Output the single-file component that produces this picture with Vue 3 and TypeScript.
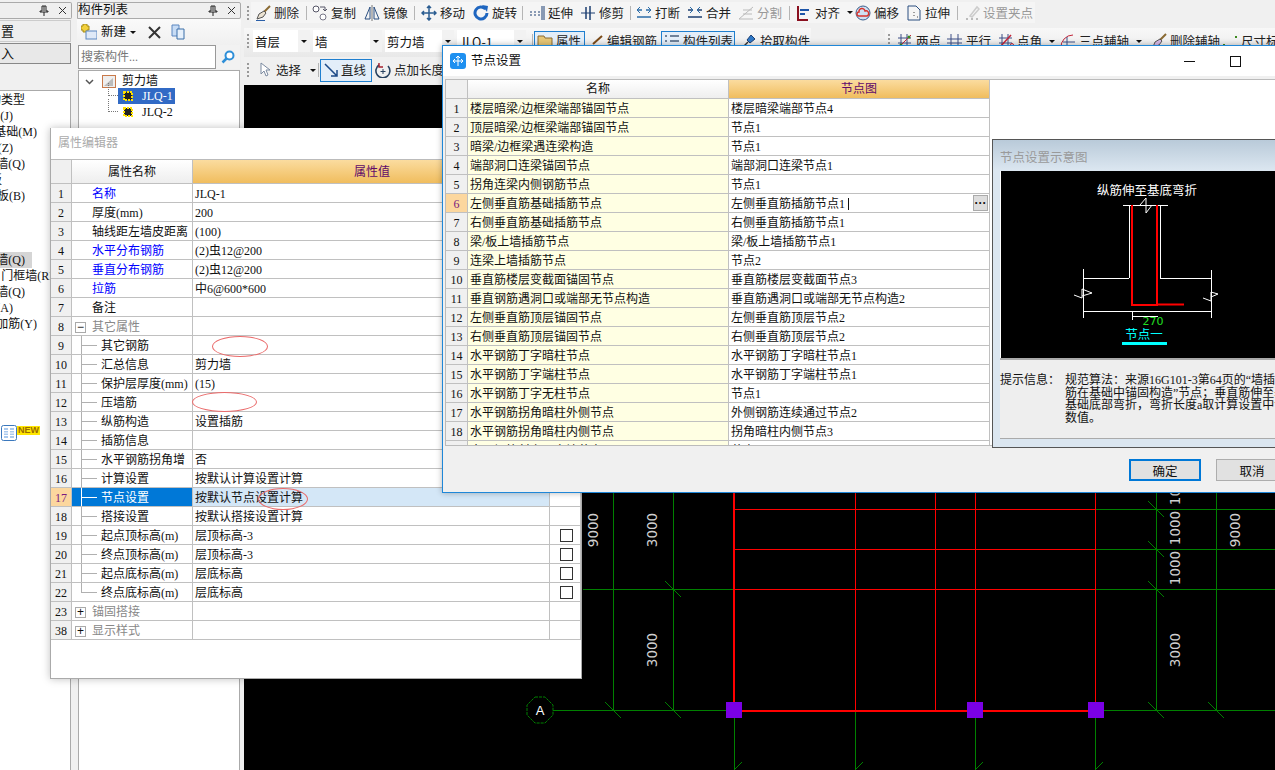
<script setup lang="ts">
interface Tool { icon?: string; text?: string; w?: number; pad?: number; caret?: boolean; off?: boolean; sep?: boolean; on?: boolean }

const L = (d: string, c = '#1d3f72', w = 1) => `<path d="${d}" fill="none" stroke="${c}" stroke-width="${w}"/>`

const icons: Record<string, string> = {
  brush: L('M15 1 9 7', '#8a6a32', 2) + '<path d="M9 6l2 2-3 4-6 2 2-5z" fill="#ece3d2" stroke="#555"/>' + L('M1 15.5h9', '#2a5fa8'),
  copy: '<circle cx="4" cy="4" r="3" fill="#fff" stroke="#556"/><circle cx="11" cy="12" r="3" fill="#fff" stroke="#778"/>' + L('M8 2h5v4M11 4l2 2 2-2', '#556'),
  mirror: L('M6 2 1 14h5zM10 2l5 12h-5z', '#2b4f80') + L('M8 0v16', '#777'),
  move: L('M8 1v14M1 8h14M6 3l2-2 2 2M6 13l2 2 2-2M3 6 1 8l2 2M13 6l2 2-2 2', '#2b5d91', 1.5),
  rotate: L('M12.5 4A6 6 0 1 0 14 8', '#1f66c0', 3) + '<path d="M9 0l6 1-1 6z" fill="#1f66c0"/>',
  extend: L('M1 7h2M5 7h2M9 7h2M1 10h2M5 10h2M9 10h2', '#1d3f72') + L('M13 1v14M15 1v14', '#1d3f72'),
  trim: L('M1 8h14', '#1d3f72') + L('M6 2v12M10 1v14', '#1d3f72', 1.5),
  cut: L('M1 5h5M10 5h5M1 12h14', '#2b6ca8', 1.5) + L('M4 2 1 5l3 3M12 2l3 3-3 3', '#2b6ca8'),
  join: L('M1 5h5M10 5h5M1 12h14', '#1d3f72', 1.5) + L('M3 2l3 3-3 3M13 2l-3 3 3 3', '#2b6ca8'),
  split: L('M1 14 15 2M1 14h14M5 9h9M5 5h9', '#bbb'),
  align: L('M2 1v14h10', '#8a1020', 2) + L('M4 5h9M4 9h5', '#1d55a8', 2),
  offset: '<circle cx="8" cy="8" r="7" fill="#cfe0f2" stroke="#3a5f8c"/>' + L('M4 11a2 2 0 0 1 0-4 3 3 0 0 1 6-1 2.5 2.5 0 0 1 2 5z', '#d8342c', 1.4),
  stretch: L('M2 1h8l4 4v10H2z', '#2b4f80') + L('M8 7v1M8 10v1M11 12h1', '#444'),
  grip: L('M2 14h2M7 14h2M12 14h2', '#bbb', 2) + L('M6 11 13 2l2 2-7 8z', '#ccc', 1.5),
  folder: '<path d="M1 3h6l1 2h7v9H1z" fill="#e6c676" stroke="#8a6a32"/>',
  edit: L('M1 13h13', '#888', 2) + L('M5 11 14 3', '#7a4a18', 2),
  list: L('M1 3h2M1 8h2M1 13h2M6 3h9M6 8h9M6 13h9', '#4a5f7a', 1.5),
  pick: L('M1 15 7 9', '#333', 1.5) + '<path d="M6 7l4-5 4 4-5 4z" fill="#2f79c8" stroke="#1d3f72"/>',
  two: L('M4 1v14M10 1v14M1 5h13M1 10h13', '#3d4f86') + L('M2 14 14 2', '#c3263a') + '<circle cx="4" cy="12" r="1.5" fill="#3c8a1f"/><circle cx="12" cy="4" r="1.5" fill="#3c8a1f"/>',
  para: L('M4 1v14M11 1v14M0 6h15M0 10h15', '#3d4f86'),
  angle: L('M4 1v14M10 1v14M1 5h13M1 10h13', '#3d4f86') + L('M2 14 13 2', '#c3263a', 1.5) + '<circle cx="14" cy="12" r="1.5" fill="none" stroke="#c3263a"/>',
  arc: L('M1 15A12 12 0 0 1 13 2', '#c3263a') + L('M7 4v11M3 9h12', '#3d4f86'),
  delaxis: L('M15 1 9 7', '#8a6a32', 2) + '<path d="M9 6l2 2-3 4-6 2 2-5z" fill="#d7b9e6" stroke="#555"/>',
  dim: L('M2 11v2M14 3v2M7 14h1M11 14h1', '#3c8a1f', 2),
  select: '<path d="M4 1v11l3-3 2 5 2-1-2-5h4z" fill="#fff" stroke="#7b8aa0"/>',
  line: L('M2 2 14 14M8 14h6V8', '#1d4a88', 1.5),
  lengthen: L('M4 3a7 7 0 1 0 9 1', '#27415f', 1.6) + L('M4 1v4h4', '#a51f2c', 1.4) + L('M8 7v5M5.5 9.5h5', '#27415f'),
  add: '<path d="M2 0h4v2h2v4H6v2H2V6H0V2h2z" fill="#f2d03c" stroke="#a58a16"/><rect x="5" y="7" width="11" height="8" fill="#dfe9f7" stroke="#5b86c0"/>',
  copydoc: '<path d="M2 1h7v11H2z" fill="#c7dcf5" stroke="#5b86c0"/><path d="M7 5h7v10H7z" fill="#e6f0fb" stroke="#3a6ea8"/>',
}

const row1: Tool[] = [
  { icon: 'brush', text: '删除', w: 46 }, { sep: true },
  { icon: 'copy', text: '复制', w: 52 },
  { icon: 'mirror', text: '镜像', w: 45 }, { sep: true },
  { icon: 'move', text: '移动', w: 53, pad: 1 },
  { icon: 'rotate', text: '旋转', w: 44 }, { sep: true },
  { icon: 'extend', text: '延伸', w: 52, pad: 1 },
  { icon: 'trim', text: '修剪', w: 45 }, { sep: true },
  { icon: 'cut', text: '打断', w: 51 },
  { icon: 'join', text: '合并', w: 51 },
  { icon: 'split', text: '分割', w: 46, off: true }, { sep: true },
  { icon: 'align', text: '对齐', w: 60, caret: true, pad: 1 },
  { icon: 'offset', text: '偏移', w: 51 },
  { icon: 'stretch', text: '拉伸', w: 46 }, { sep: true },
  { icon: 'grip', text: '设置夹点', w: 72, off: true, pad: 1 },
]

const combos = [
  { text: '首层', w: 57 }, { text: '墙', w: 69 }, { text: '剪力墙', w: 69 }, { text: 'JLQ-1', w: 69 },
]

const row2: Tool[] = [
  { icon: 'folder', text: '属性', w: 51, on: true, pad: 2 },
  { icon: 'edit', text: '编辑钢筋', w: 76, pad: 3 },
  { icon: 'list', text: '构件列表', w: 74, on: true, pad: 2 },
  { icon: 'pick', text: '拾取构件', w: 76, pad: 6 },
]

const row2b: Tool[] = [
  { icon: 'two', text: '两点', w: 50 },
  { icon: 'para', text: '平行', w: 51 },
  { icon: 'angle', text: '点角', w: 62, caret: true },
  { icon: 'arc', text: '三点辅轴', w: 91, caret: true },
  { icon: 'delaxis', text: '删除辅轴', w: 71 },
  { icon: 'dim', text: '尺寸标注', w: 80 },
]

const leftItems = [
  { text: '构类型', end: 25 }, { text: '(J)', end: 13 }, { text: '基础(M)', end: 37 }, { text: '(Z)', end: 13 },
  { text: '墙(Q)', end: 25 }, { text: '板', end: 2 }, { text: '板(B)', end: 25 }, { text: '', end: 0 }, { text: '', end: 0 },
  { text: '', end: 0 }, { text: '墙(Q)', end: 25, hot: true }, { text: '门框墙(RF)', end: 60 }, { text: '墙(Q)', end: 25 },
  { text: '(A)', end: 13 }, { text: '加筋(Y)', end: 37 },
]

type Kind = 'plain' | 'link' | 'group' | 'child' | 'last' | 'closed'
const props: { n: number; name: string; value?: string; kind: Kind; check?: boolean; cur?: boolean }[] = [
  { n: 1, name: '名称', value: 'JLQ-1', kind: 'link' },
  { n: 2, name: '厚度(mm)', value: '200', kind: 'plain' },
  { n: 3, name: '轴线距左墙皮距离', value: '(100)', kind: 'plain' },
  { n: 4, name: '水平分布钢筋', value: '(2)虫12@200', kind: 'link' },
  { n: 5, name: '垂直分布钢筋', value: '(2)虫12@200', kind: 'link' },
  { n: 6, name: '拉筋', value: '中6@600*600', kind: 'link' },
  { n: 7, name: '备注', kind: 'plain' },
  { n: 8, name: '其它属性', kind: 'group' },
  { n: 9, name: '其它钢筋', kind: 'child' },
  { n: 10, name: '汇总信息', value: '剪力墙', kind: 'child' },
  { n: 11, name: '保护层厚度(mm)', value: '(15)', kind: 'child' },
  { n: 12, name: '压墙筋', kind: 'child' },
  { n: 13, name: '纵筋构造', value: '设置插筋', kind: 'child' },
  { n: 14, name: '插筋信息', kind: 'child' },
  { n: 15, name: '水平钢筋拐角增', value: '否', kind: 'child' },
  { n: 16, name: '计算设置', value: '按默认计算设置计算', kind: 'child' },
  { n: 17, name: '节点设置', value: '按默认节点设置计算', kind: 'child', cur: true },
  { n: 18, name: '搭接设置', value: '按默认搭接设置计算', kind: 'child' },
  { n: 19, name: '起点顶标高(m)', value: '层顶标高-3', kind: 'child', check: true },
  { n: 20, name: '终点顶标高(m)', value: '层顶标高-3', kind: 'child', check: true },
  { n: 21, name: '起点底标高(m)', value: '层底标高', kind: 'child', check: true },
  { n: 22, name: '终点底标高(m)', value: '层底标高', kind: 'last', check: true },
  { n: 23, name: '锚固搭接', kind: 'closed' },
  { n: 38, name: '显示样式', kind: 'closed' },
]

const nodes: [string, string][] = [
  ['楼层暗梁/边框梁端部锚固节点', '楼层暗梁端部节点4'],
  ['顶层暗梁/边框梁端部锚固节点', '节点1'],
  ['暗梁/边框梁遇连梁构造', '节点1'],
  ['端部洞口连梁锚固节点', '端部洞口连梁节点1'],
  ['拐角连梁内侧钢筋节点', '节点1'],
  ['左侧垂直筋基础插筋节点', '左侧垂直筋插筋节点1'],
  ['右侧垂直筋基础插筋节点', '右侧垂直筋插筋节点1'],
  ['梁/板上墙插筋节点', '梁/板上墙插筋节点1'],
  ['连梁上墙插筋节点', '节点2'],
  ['垂直筋楼层变截面锚固节点', '垂直筋楼层变截面节点3'],
  ['垂直钢筋遇洞口或端部无节点构造', '垂直筋遇洞口或端部无节点构造2'],
  ['左侧垂直筋顶层锚固节点', '左侧垂直筋顶层节点2'],
  ['右侧垂直筋顶层锚固节点', '右侧垂直筋顶层节点2'],
  ['水平钢筋丁字暗柱节点', '水平钢筋丁字暗柱节点1'],
  ['水平钢筋丁字端柱节点', '水平钢筋丁字端柱节点1'],
  ['水平钢筋丁字无柱节点', '节点1'],
  ['水平钢筋拐角暗柱外侧节点', '外侧钢筋连续通过节点2'],
  ['水平钢筋拐角暗柱内侧节点', '拐角暗柱内侧节点3'],
  ['水平钢筋斜交丁字墙节点', '节点1'],
]

// 画布坐标直接用页面坐标，viewBox 从 (244,85) 开始。线段写成 [x, y, w, h]
const greenLines = [
  [613, 493, 1, 217], [673, 493, 1, 217], [1156, 493, 1, 217], [1216, 493, 1, 217],
  [734, 710, 1, 60], [855, 710, 1, 60], [975, 710, 1, 60], [1095, 710, 1, 60],
  [1095, 509, 180, 1], [1095, 549, 180, 1], [583, 589, 151, 1], [1095, 589, 180, 1],
  [553, 710, 181, 1], [1095, 710, 180, 1],
]
const ticks = [
  [613, 710], [673, 710], [1156, 710], [1216, 710], [673, 589], [1156, 589], [1156, 549], [1156, 509],
]
const feet = [734, 855, 975, 1095]
const redLines = [
  [855, 493, 1, 217], [935, 493, 1, 217], [975, 493, 1, 217], [1095, 493, 1, 217],
  [734, 509, 361, 1], [734, 549, 361, 1], [734, 589, 361, 1],
  [733, 493, 2, 218], [734, 710, 362, 2],
]
const dims = [
  { x: 594, y: 530, t: '9000' }, { x: 653, y: 530, t: '3000' }, { x: 653, y: 650, t: '3000' },
  { x: 1176, y: 488, t: '1000' }, { x: 1176, y: 528, t: '1000' }, { x: 1176, y: 568, t: '1000' },
  { x: 1236, y: 530, t: '9000' }, { x: 1176, y: 650, t: '3000' },
]
const squares = [726, 967, 1088]
</script>

<template>
  <div class="app">
    <!-- 左侧导航 -->
    <aside class="nav">
      <div class="dock-title">
        <span class="dock-btns">
          <svg width="10" height="11" viewBox="0 0 10 11"><path d="M3 1h4v5h2v1H1V6h2zM5 7v4M5 1v5" fill="none" stroke="#222"/></svg>
          <svg width="9" height="9" viewBox="0 0 9 9"><path d="M1 1l7 7M8 1 1 8" stroke="#333"/></svg>
        </span>
      </div>
      <div class="nav-btn"><span>置</span></div>
      <div class="nav-btn dark"><span>入</span></div>
      <div class="nav-list">
        <div v-for="(it, i) in leftItems" :key="i" class="nav-item" :class="{ hot: it.hot }">
          <span class="clip" :style="{ width: it.end + 'px' }"><span>{{ it.text }}</span></span>
        </div>
        <div class="new-row">
          <svg width="16" height="16" viewBox="0 0 16 16"><rect x=".5" y=".5" width="15" height="15" rx="2" fill="#fff" stroke="#3b78bd"/><rect x="3" y="3" width="4" height="10" fill="#a9c9ee"/><rect x="9" y="3" width="4" height="10" fill="#a9c9ee"/><path d="M3 5.5h4M3 8h4M3 10.5h4M9 5.5h4M9 8h4M9 10.5h4" stroke="#fff"/></svg>
          <span class="new">NEW</span>
        </div>
      </div>
    </aside>

    <!-- 构件列表 -->
    <aside class="comp">
      <div class="dock-title wide">
        <span class="dock-name">构件列表</span>
        <span class="dock-btns">
          <svg width="10" height="11" viewBox="0 0 10 11"><path d="M3 1h4v5h2v1H1V6h2zM5 7v4M5 1v5" fill="none" stroke="#222"/></svg>
          <svg width="9" height="9" viewBox="0 0 9 9"><path d="M1 1l7 7M8 1 1 8" stroke="#333"/></svg>
        </span>
      </div>
      <div class="comp-tools">
        <svg width="16" height="16" viewBox="0 0 16 16" v-html="icons.add"></svg>
        <span class="new-text">新建</span><span class="caret"></span>
        <svg class="x" width="13" height="13" viewBox="0 0 13 13"><path d="M1 1l11 11M12 1 1 12" stroke="#333" stroke-width="2"/></svg>
        <svg class="dup" width="16" height="16" viewBox="0 0 16 16" v-html="icons.copydoc"></svg>
      </div>
      <div class="search">
        <span class="search-input">搜索构件...</span>
        <span class="search-btn">
          <svg width="14" height="14" viewBox="0 0 14 14"><circle cx="8.5" cy="5.5" r="4" fill="#fff" stroke="#2e8fd8" stroke-width="2"/><path d="M5.5 8.5 1.5 12.5" stroke="#2e8fd8" stroke-width="2.5"/></svg>
        </span>
      </div>
      <div class="tree">
        <div class="tree-row root">
          <svg class="chev" width="9" height="6" viewBox="0 0 9 6"><path d="M1 1l3.5 3.5L8 1" fill="none" stroke="#555" stroke-width="1.5"/></svg>
          <svg width="14" height="13" viewBox="0 0 14 13"><rect x=".5" y=".5" width="13" height="12" fill="#eee" stroke="#c9794a"/><path d="M2 11 11 3v8z" fill="#bbb"/></svg>
          <span class="root-name">剪力墙</span>
        </div>
        <div class="tree-row child">
          <span class="dots"></span>
          <span class="sel">
            <svg width="12" height="12" viewBox="0 0 12 12"><rect x="2" y="2" width="8" height="8" fill="#222" stroke="#ffe100" stroke-width="2" stroke-dasharray="2 1"/></svg>
            <span class="leaf">JLQ-1</span>
          </span>
        </div>
        <div class="tree-row child">
          <span class="dots"></span>
          <span class="unsel">
            <svg width="12" height="12" viewBox="0 0 12 12"><rect x="2" y="2" width="8" height="8" fill="#222" stroke="#ffe100" stroke-width="2" stroke-dasharray="2 1"/></svg>
            <span class="leaf">JLQ-2</span>
          </span>
        </div>
      </div>
    </aside>

    <!-- 工具栏 + 绘图区 -->
    <main class="main">
      <div class="bar bar1">
        <span class="grip"></span>
        <div class="tool-strip">
          <template v-for="(t, i) in row1" :key="i">
            <span v-if="t.sep" class="sep"></span>
            <span v-else class="tool" :class="{ off: t.off }" :style="{ width: t.w + 'px', paddingLeft: (t.pad ?? 0) + 'px' }">
              <svg width="16" height="16" viewBox="0 0 16 16" v-html="icons[t.icon!]"></svg>
              <span>{{ t.text }}</span><span v-if="t.caret" class="caret"></span>
            </span>
          </template>
        </div>
      </div>
      <div class="bar bar2">
        <div class="seg seg-a">
          <span class="grip"></span>
          <span v-for="c in combos" :key="c.text" class="combo" :style="{ width: c.w + 'px' }">
            <span class="combo-text">{{ c.text }}</span><span class="combo-arrow"><span class="caret"></span></span>
          </span>
          <span class="sep sep-a"></span>
          <span v-for="t in row2" :key="t.text" class="tool" :class="{ on: t.on }" :style="{ width: t.w + 'px', paddingLeft: t.pad + 'px' }">
            <svg width="16" height="16" viewBox="0 0 16 16" v-html="icons[t.icon!]"></svg>
            <span>{{ t.text }}</span>
          </span>
        </div>
        <div class="seg seg-b">
          <span class="grip"></span>
          <span v-for="t in row2b" :key="t.text" class="tool" :style="{ width: t.w + 'px' }">
            <svg width="16" height="16" viewBox="0 0 16 16" v-html="icons[t.icon!]"></svg>
            <span>{{ t.text }}</span><span v-if="t.caret" class="caret"></span>
          </span>
        </div>
      </div>
      <div class="bar bar3">
        <span class="grip"></span>
        <span class="tool sel-tool">
          <svg width="16" height="16" viewBox="0 0 16 16" v-html="icons.select"></svg>
          <span>选择</span><span class="caret"></span>
        </span>
        <span class="sep sep-b"></span>
        <span class="tool on line-tool">
          <svg width="16" height="16" viewBox="0 0 16 16" v-html="icons.line"></svg>
          <span>直线</span>
        </span>
        <span class="tool len-tool">
          <svg width="16" height="16" viewBox="0 0 16 16" v-html="icons.lengthen"></svg>
          <span>点加长度</span>
        </span>
      </div>
      <svg class="canvas" viewBox="244 85 1031 685" width="1031" height="685">
        <rect v-for="r in greenLines" :key="r.join()" :x="r[0]" :y="r[1]" :width="r[2]" :height="r[3]" fill="#008000" />
        <g fill="none" stroke="#008000">
          <path v-for="p in ticks" :key="p.join()" :d="`M${p[0] - 8} ${p[1] - 8}L${p[0] + 8} ${p[1] + 8}`" />
          <path v-for="x in feet" :key="x" :d="`M${x} 770L${x + 8} 762`" />
        </g>
        <rect v-for="r in redLines" :key="r.join()" :x="r[0]" :y="r[1]" :width="r[2]" :height="r[3]" fill="#f00" />
        <rect v-for="x in squares" :key="x" :x="x" y="702" width="16" height="16" fill="#7a00e6" />
        <text v-for="d in dims" :key="d.x + '-' + d.y" class="dim" :x="d.x" :y="d.y" :transform="`rotate(-90 ${d.x} ${d.y})`" text-anchor="middle" dominant-baseline="middle">{{ d.t }}</text>
        <path d="M535 697h10l8 8v10l-8 8h-10l-8-8v-10z" fill="none" stroke="#008000" stroke-dasharray="3 1" />
        <text class="axis" x="540" y="715" text-anchor="middle">A</text>
      </svg>
    </main>

    <!-- 属性编辑器浮动窗口 -->
    <section class="props-win">
      <header class="props-title">属性编辑器</header>
      <div class="pg">
        <div class="pg-row pg-head">
          <span class="pg-num"></span>
          <span class="pg-name head-name">属性名称</span>
          <span class="pg-val head-val">属性值</span>
          <span class="pg-end head-val"></span>
        </div>
        <div v-for="p in props" :key="p.n" class="pg-row" :class="{ cur: p.cur }">
          <span class="pg-num">{{ p.n }}</span>
          <span class="pg-name" :class="p.kind">
            <span v-if="p.kind === 'group' || p.kind === 'closed'" class="box">{{ p.kind === 'group' ? '−' : '+' }}</span>
            {{ p.name }}
          </span>
          <span class="pg-val">{{ p.value }}</span>
          <span class="pg-end"><span v-if="p.check" class="chk"></span></span>
        </div>
      </div>
      <span class="mark m1"></span>
      <span class="mark m2"></span>
      <span class="mark m3"></span>
    </section>

    <!-- 节点设置对话框 -->
    <section class="node-win">
      <header class="node-title">
        <svg width="16" height="16" viewBox="0 0 16 16"><rect width="16" height="16" rx="3" fill="#1e90f0"/><path d="M8 3v10M4 8h8M6 5l2-2 2 2M3 8l2-2M3 8l2 2M13 8l-2-2M13 8l-2 2" stroke="#fff" fill="none"/></svg>
        <span class="node-name">节点设置</span>
        <span class="ctl"><svg width="11" height="11" viewBox="0 0 11 11"><path d="M0 5.5h11" stroke="#111" /></svg></span>
        <span class="ctl"><svg width="11" height="11" viewBox="0 0 11 11"><rect x=".5" y=".5" width="10" height="10" fill="none" stroke="#111"/></svg></span>
        <span class="ctl"><svg width="11" height="11" viewBox="0 0 11 11"><path d="M0 0l11 11M11 0 0 11" stroke="#111"/></svg></span>
      </header>
      <div class="node-band"></div>
      <div class="ng">
        <div class="ng-row ng-head">
          <span class="ng-num"></span>
          <span class="ng-cell head-name">名称</span>
          <span class="ng-cell head-val">节点图</span>
        </div>
        <div v-for="(r, i) in nodes" :key="i" class="ng-row" :class="{ cur: i === 5 }">
          <span class="ng-num">{{ i + 1 }}</span>
          <span class="ng-cell ng-label">{{ r[0] }}</span>
          <span class="ng-cell ng-value">
            <span>{{ r[1] }}<span v-if="i === 5" class="cursor"></span></span>
            <span v-if="i === 5" class="more">···</span>
          </span>
        </div>
      </div>
      <footer class="node-foot">
        <button class="btn primary" type="button">确定</button>
        <button class="btn" type="button">取消</button>
      </footer>

      <div class="preview">
        <div class="preview-title">节点设置示意图</div>
        <div class="preview-pic">
          <svg viewBox="1001 171 300 187" width="300" height="187">
            <text class="pic-title" x="1147" y="195" text-anchor="middle">纵筋伸至基底弯折</text>
            <g fill="none" stroke="#fff">
              <path d="M1123 205.5H1168M1129.5 205V278M1160.5 205V278M1083 278.5H1129M1160 278.5H1211M1083.5 269V318M1211.5 270V318M1083 311.5H1211" />
              <path d="M1132 316.5H1158M1132.5 312V320" />
              <path d="M1140 205L1146 198V213L1152 205" />
              <path d="M1074 295L1082 298V289L1092 293L1082 296" />
              <path d="M1203 298L1211 301V292L1218 294L1211 297" />
            </g>
            <path d="M1132 205V305H1157V205M1157 304.5H1184" fill="none" stroke="#f00" stroke-width="2" />
            <text class="pic-num" x="1153" y="325" text-anchor="middle">270</text>
            <text class="pic-node" x="1144" y="339" text-anchor="middle">节点一</text>
            <rect x="1122" y="342" width="45" height="3" fill="#00ffff" />
          </svg>
        </div>
        <div class="hint">
          <span class="hint-label">提示信息：</span>
          <span class="hint-text">规范算法：来源16G101-3第64页的“墙插筋<br>筋在基础中锚固构造”节点；垂直筋伸至基础<br>基础底部弯折，弯折长度a取计算设置中设定的<br>数值。</span>
        </div>
      </div>
    </section>
  </div>
</template>

<style>
html, body { margin: 0; background: #f0f0f0; overflow: hidden; }
</style>

<style scoped>
.app {
  position: relative;
  display: flex;
  width: 1275px;
  height: 770px;
  overflow: hidden;
  background: #f0f0f0;
  color: #111;
  font: 12px/19px "Liberation Serif", "Noto Sans CJK SC", serif;
}

/* 左侧导航 */
.nav { width: 72px; flex: none; display: flex; flex-direction: column; }
.dock-title {
  height: 15px;
  margin-top: 2px;
  background: #efefef;
  border: 1px solid #aaa;
  border-left: 0;
  border-radius: 0 2px 2px 0;
  display: flex;
  align-items: center;
  justify-content: flex-end;
}
.dock-title.wide { border-left: 1px solid #aaa; justify-content: space-between; }
.dock-name { font-size: 12.5px; }
.dock-btns { display: flex; gap: 9px; padding-right: 4px; align-items: center; }
.nav-btn {
  height: 20px;
  margin-top: 1px;
  background: #eee;
  border: 1px solid #ccc;
  border-left: 0;
  display: flex;
  align-items: center;
  width: 70px;
  font-size: 13px;
}
.nav-btn.dark { border-color: #888; background: #e8e8e8; height: 19px; }
.nav-btn span { margin-left: 1px; }
.nav-list {
  flex: 1;
  margin-top: 26px;
  padding-top: 1px;
  width: 71px;
  background: #fff;
  border: 1px solid #aaa;
  border-left: 0;
  border-bottom: 0;
  box-sizing: border-box;
}
.nav-item { height: 16px; line-height: 16px; width: 32px; white-space: nowrap; }
.nav-item.hot { background: #d5d5d5; }
.nav-item:nth-child(12) { width: 60px; }
.clip { display: flex; justify-content: flex-end; overflow: hidden; height: 16px; }
.clip > span { flex: none; }
.new-row { display: flex; align-items: center; margin-top: 93px; padding-left: 1px; }
.new {
  background: #ffe600;
  color: #9a6b00;
  font: 700 9px/9px "Liberation Sans", sans-serif;
  margin-bottom: 6px;
  padding: 0 1px;
}

/* 构件列表 */
.comp { width: 164px; margin-left: 5px; flex: none; display: flex; flex-direction: column; }
.comp-tools {
  height: 26px;
  display: flex;
  align-items: center;
  padding-left: 4px;
  background: linear-gradient(#fafafa, #f0f0f0);
  box-sizing: border-box;
  font-size: 12.5px;
}
.new-text { margin-left: 4px; }
.caret {
  display: inline-block;
  width: 0;
  height: 0;
  margin-left: 4px;
  border: 3px solid transparent;
  border-top: 3px solid #111;
  border-bottom: 0;
}
.x { margin-left: 12px; }
.dup { margin-left: 9px; }
.search { height: 24px; display: flex; margin-left: 1px; background: #eee; }
.search-input {
  width: 138px;
  box-sizing: border-box;
  background: #fff;
  border: 1px solid #999;
  color: #777;
  padding-left: 2px;
  line-height: 22px;
}
.search-btn {
  width: 24px;
  display: flex;
  align-items: center;
  justify-content: center;
  background: #f2f2f2;
}
.tree {
  flex: 1;
  margin-top: 1px;
  background: #fff;
  border: 1px solid #aaa;
  border-bottom: 0;
  padding-top: 1px;
  margin-left: 1px;
  width: 162px;
  box-sizing: border-box;
}
.tree-row { height: 16px; display: flex; align-items: center; box-sizing: border-box; }
.root { padding: 3px 0 0 6px; }
.chev { margin-right: 8px; }
.root-name { margin-left: 6px; }
.child { padding-left: 29px; }
.dots {
  width: 9px;
  height: 12px;
  margin-top: -13px;
  border-left: 1px dotted #777;
  border-bottom: 1px dotted #777;
  flex: none;
}
.sel, .unsel { display: flex; align-items: center; height: 16px; width: 57px; padding-left: 4px; box-sizing: border-box; }
.sel { background: #316ac5; color: #fff; }
.leaf { margin-left: 8px; }

/* 工具栏 */
.main { width: 1031px; margin-left: 3px; flex: none; display: flex; flex-direction: column; }
.bar { flex: none; display: flex; align-items: center; }
.bar1 { height: 23px; padding-top: 2px; box-sizing: border-box; padding-left: 3px; background: #f0f0f0; }
.tool-strip { display: flex; align-items: center; height: 21px; padding-left: 4px; background: #f5f5f5; }
.grip {
  flex: none;
  width: 2px;
  height: 14px;
  background: repeating-linear-gradient(#999 0 2px, transparent 2px 4px);
  margin-right: 2px;
}
.tool { display: flex; align-items: center; gap: 3px; flex: none; height: 20px; box-sizing: border-box; font-size: 12.5px; font-family: "Noto Sans CJK SC", sans-serif; line-height: 16px; color: #222; }
.tool svg { flex: none; }
.tool.off { color: #999; }
.tool.on { background: #e3eef9; border: 1px solid #1f7fcf; }
.sep { width: 1px; height: 14px; background: #b5b5b5; margin: 0 5px; flex: none; }
.sep-a { margin: 0 1px 0 6px; }
.sep-b { margin: 0 1px; }
.bar2 { height: 29px; margin-top: 5px; align-items: flex-start; }
.seg { display: flex; align-items: center; height: 29px; padding: 0 0 3px 3px; background: linear-gradient(#f8f8f8, #e8e8e8); box-sizing: border-box; flex: none; }
.seg-a { width: 567px; }
.seg-a .grip { margin-right: 1px; }
.seg-b { margin-left: 74px; width: 390px; }
.seg-b .grip { margin-right: 7px; }
.combo { display: flex; align-items: center; height: 22px; margin-left: 3px; background: #fff; font-family: "Noto Sans CJK SC", sans-serif; font-size: 12.5px; flex: none; }
.combo-text { flex: 1; padding-left: 2px; }
.combo-arrow { width: 12px; height: 22px; background: #f2f2f2; display: flex; align-items: center; justify-content: center; }
.combo-arrow .caret { margin-left: 0; }
.bar3 { height: 28px; padding: 0 0 2px 3px; background: #f0f0f0; box-sizing: border-box; }
.bar3 .grip { margin-right: 8px; }
.sel-tool { width: 60px; }
.sel-tool .caret { margin-left: 6px; }
.line-tool { width: 52px; height: 23px; gap: 2px; padding-left: 2px; }
.len-tool { margin-left: 3px; }
.canvas { display: block; background: #000; flex: none; }
.dim { fill: #d0d0d0; font: 13.5px "DejaVu Sans", sans-serif; }
.axis { fill: #fff; font: 13px "Liberation Sans", sans-serif; }

/* 属性编辑器 */
.props-win {
  position: absolute;
  left: 50px;
  top: 128px;
  width: 532px;
  height: 551px;
  box-sizing: border-box;
  background: #fff;
  border: 1px solid #aaa;
  border-top: 0;
  box-shadow: 0 0 8px rgba(0, 0, 0, .25);
}
.props-title { height: 31px; line-height: 30px; padding-left: 7px; color: #aaa; }
.pg { border-top: 1px solid #bbb; }
.pg-row {
  display: grid;
  grid-template-columns: 21px 121px 357px 31px;
  height: 19px;
  line-height: 21px;
  border-bottom: 1px solid #c0c0c0;
  box-sizing: border-box;
  white-space: nowrap;
}
.pg-row > span { border-right: 1px solid #c0c0c0; overflow: hidden; }
.pg-head { height: 24px; line-height: 24px; }
.pg-num { background: #f0f0f0; text-align: center; }
.head-name { background: linear-gradient(#fff, #eee); text-align: center; }
.head-val { background: linear-gradient(#fbdc9f, #f0bd5e); color: #5f0a6a; text-align: center; }
.pg-name { padding-left: 20px; }
.pg-name.head-name { padding-left: 0; }
.pg-name.link { color: #00f; }
.pg-name.group, .pg-name.closed { color: #888; padding-left: 3px; }
.pg-name.child, .pg-name.last {
  padding-left: 29px;
  background:
    linear-gradient(#b0b0b0, #b0b0b0) 9px 0 / 1px 100% no-repeat,
    linear-gradient(#b0b0b0, #b0b0b0) 9px 50% / 16px 1px no-repeat;
}
.pg-name.last {
  background:
    linear-gradient(#b0b0b0, #b0b0b0) 9px 0 / 1px 50% no-repeat,
    linear-gradient(#b0b0b0, #b0b0b0) 9px 50% / 16px 1px no-repeat;
}
.box {
  display: inline-block;
  width: 11px;
  height: 11px;
  margin-right: 3px;
  border: 1px solid #aaa;
  box-sizing: border-box;
  color: #111;
  text-align: center;
  font: 12px/9px "Liberation Sans", sans-serif;
}
.pg-val { padding-left: 2px; }
.pg-end { display: flex; align-items: center; justify-content: center; padding-left: 3px; }
.chk { width: 13px; height: 13px; box-sizing: border-box; border: 1px solid #333; background: #fff; }
.cur .pg-num { background: #fcd79e; color: #7a1a80; }
.cur .pg-name {
  color: #fff;
  background:
    linear-gradient(#fff, #fff) 9px 0 / 1px 100% no-repeat,
    linear-gradient(#fff, #fff) 9px 50% / 16px 1px no-repeat,
    #0078d7;
}
.cur .pg-val { background: #d4e7f7; }
.mark { position: absolute; border: 1px solid #ea6a6a; border-radius: 50%; box-sizing: border-box; }
.m1 { left: 161px; top: 208px; width: 56px; height: 21px; }
.m2 { left: 141px; top: 264px; width: 65px; height: 20px; }
.m3 { left: 207px; top: 360px; width: 50px; height: 22px; }

/* 节点设置 */
.node-win {
  position: absolute;
  left: 442px;
  top: 45px;
  width: 863px;
  height: 448px;
  box-sizing: border-box;
  background: #f0f0f0;
  border: 1px solid #1f87d8;
  box-shadow: 0 0 6px rgba(0, 0, 0, .3);
}
.node-title { height: 30px; background: #fff; display: flex; align-items: center; padding-left: 7px; }
.node-name { margin-left: 5px; flex: 1; font-size: 12.5px; }
.ctl { width: 46px; display: flex; justify-content: center; }
.node-band { height: 3px; background: #f0f0f0; }
.ng {
  margin-left: 2px;
  height: 367px;
  overflow: hidden;
  box-sizing: border-box;
  background: #fff;
  border: 1px solid #bbb;
  border-right: 0;
}
.ng-row {
  display: grid;
  grid-template-columns: 22px 261px 261px;
  width: 544px;
  height: 19px;
  line-height: 21px;
  box-sizing: border-box;
  border-bottom: 1px solid #c0c0c0;
  white-space: nowrap;
}
.ng-row > span { border-right: 1px solid #c0c0c0; overflow: hidden; }
.ng-head { line-height: 19px; }
.ng-num { background: #f0f0f0; text-align: center; }
.ng-cell { padding-left: 2px; }
.ng-label { background: #ffffe3; }
.ng-value { display: flex; justify-content: space-between; }
.cursor { display: inline-block; width: 1px; height: 12px; background: #111; margin-left: 3px; vertical-align: -2px; }
.more {
  width: 15px;
  height: 16px;
  margin: 1px 1px 0 0;
  line-height: 14px;
  text-align: center;
  font-weight: 700;
  background: #ddd;
  border: 1px solid #aaa;
  box-sizing: border-box;
  font-family: "Liberation Sans", sans-serif;
}
.cur .ng-num { background: #fcd79e; color: #7a1a80; }
.ng-head .head-name, .ng-head .head-val { padding: 0; }
.node-foot { display: flex; gap: 15px; padding: 13px 0 0 686px; }
.btn {
  width: 72px;
  height: 22px;
  padding: 0;
  box-sizing: border-box;
  background: #e1e1e1;
  border: 1px solid #adadad;
  color: #111;
  font: 12.5px "Noto Sans CJK SC", sans-serif;
}
.btn.primary { border: 2px solid #0078d7; }
.preview {
  position: absolute;
  left: 549px;
  top: 93px;
  width: 320px;
  height: 309px;
  box-sizing: border-box;
  border: 1px solid #555;
  background: linear-gradient(#b9cad9, #dbe6f0 30px, #dbe6f0);
  padding: 0 0 0 7px;
}
.preview-title { height: 31px; line-height: 37px; color: #9a9a9a; font-size: 12.5px; }
.preview-pic { height: 187px; background: #000; border-left: 1px solid #fff; overflow: hidden; }
.preview-pic svg { display: block; }
.pic-title { fill: #fff; font: 12.5px "Noto Sans CJK SC", sans-serif; }
.pic-num { fill: #22e022; font: 11px "DejaVu Sans", sans-serif; }
.pic-node { fill: #00ffff; font: 12.5px "Noto Sans CJK SC", sans-serif; }
.hint {
  height: 81px;
  box-sizing: border-box;
  background: #eee;
  border-top: 2px solid #aaa;
  border-bottom: 1px solid #aaa;
  display: flex;
  padding-top: 14px;
  line-height: 12.5px;
  white-space: nowrap;
}
.hint-label { width: 65px; flex: none; }
</style>
